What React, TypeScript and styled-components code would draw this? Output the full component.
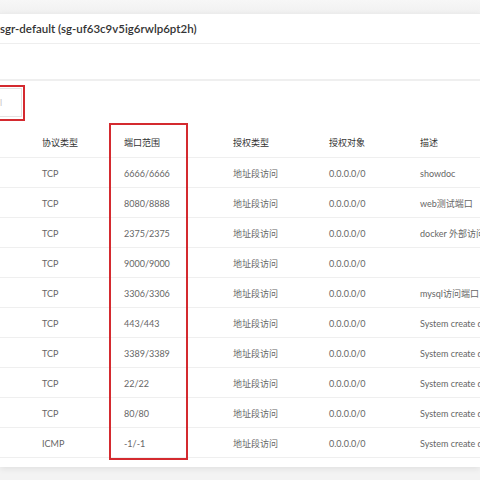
import React from "react";
import styled, { createGlobalStyle } from "styled-components";

const Global = createGlobalStyle`
  html, body { margin: 0; padding: 0; background: #f3f3f3; }
  body { font-family: Lato, "Noto Sans CJK SC", sans-serif; }
`;

const Page = styled.div`
  width: 480px;
  height: 480px;
  overflow: hidden;
  background: #f3f3f3;
  display: flex;
  flex-direction: column;
`;

const TopBand = styled.div`
  height: 13px;
  flex: none;
  background: linear-gradient(#f7f7f7, #f1f1f1);
`;

const Card = styled.div`
  background: #fff;
  box-shadow: 0 2px 6px rgba(0, 0, 0, 0.08);
  border-top: 1px solid #ececec;
  padding-bottom: 9px;
  display: flex;
  flex-direction: column;
`;

const TitleRow = styled.div`
  height: 29px;
  display: flex;
  align-items: center;
  border-bottom: 1px solid #eeeeee;
  font-size: 11.5px;
  font-weight: 600;
  color: #333;
  white-space: nowrap;
`;

const BlankSection = styled.div`
  height: 35px;
  border-bottom: 2px solid #efefef;
`;

const Toolbar = styled.div`
  height: 46px;
  padding-top: 7px;
  box-sizing: border-box;
`;

const InputWrap = styled.div`
  position: relative;
  width: 22px;
  height: 29px;
`;

const InputBox = styled.div`
  width: 22px;
  height: 29px;
  box-sizing: border-box;
  border: 1px solid #e3e3e3;
  border-left: none;
  display: flex;
  align-items: center;
  font-size: 9px;
  color: #c8c8c8;
  overflow: hidden;
`;

const Highlight = styled.div`
  position: absolute;
  border: 2px solid #d42a2f;
  pointer-events: none;
`;

const InputHighlight = styled(Highlight)`
  left: -10px;
  right: -3px;
  top: -3px;
  bottom: -4px;
`;

const ColumnHighlight = styled(Highlight)`
  left: 109px;
  width: 75px;
  top: -4px;
  bottom: -2px;
`;

const TableWrap = styled.div`
  position: relative;
`;

const Grid = styled.div`
  display: grid;
  grid-template-columns: 124px 109px 96px 91px 160px;
  width: 580px;
`;

const Row = styled.div<{ $head?: boolean }>`
  display: contents;
  & > div {
    height: ${(p) => (p.$head ? "31px" : "30px")};
    padding-top: 1px;
    border-bottom: 1px solid #efefef;
    color: ${(p) => (p.$head ? "#333" : "#666")};
  }
`;

const Cell = styled.div`
  box-sizing: border-box;
  display: flex;
  align-items: center;
  font-size: 9px;
  white-space: nowrap;
  &:first-child {
    padding-left: 42px;
  }
`;

const rows = [
  ["TCP", "6666/6666", "地址段访问", "0.0.0.0/0", "showdoc"],
  ["TCP", "8080/8888", "地址段访问", "0.0.0.0/0", "web测试端口"],
  ["TCP", "2375/2375", "地址段访问", "0.0.0.0/0", "docker 外部访问"],
  ["TCP", "9000/9000", "地址段访问", "0.0.0.0/0", ""],
  ["TCP", "3306/3306", "地址段访问", "0.0.0.0/0", "mysql访问端口"],
  ["TCP", "443/443", "地址段访问", "0.0.0.0/0", "System create default"],
  ["TCP", "3389/3389", "地址段访问", "0.0.0.0/0", "System create default"],
  ["TCP", "22/22", "地址段访问", "0.0.0.0/0", "System create default"],
  ["TCP", "80/80", "地址段访问", "0.0.0.0/0", "System create default"],
  ["ICMP", "-1/-1", "地址段访问", "0.0.0.0/0", "System create default"],
];

const headers = ["协议类型", "端口范围", "授权类型", "授权对象", "描述"];

export default function App() {
  return (
    <Page>
      <Global />
      <TopBand />
      <Card>
        <TitleRow>sgr-default (sg-uf63c9v5ig6rwlp6pt2h)</TitleRow>
        <BlankSection />
        <Toolbar>
          <InputWrap>
            <InputBox>l</InputBox>
            <InputHighlight />
          </InputWrap>
        </Toolbar>
        <TableWrap>
          <Grid>
            <Row $head>
              {headers.map((h) => (
                <Cell key={h}>{h}</Cell>
              ))}
            </Row>
            {rows.map((r, i) => (
              <Row key={i}>
                {r.map((c, j) => (
                  <Cell key={j}>{c}</Cell>
                ))}
              </Row>
            ))}
          </Grid>
          <ColumnHighlight />
        </TableWrap>
      </Card>
    </Page>
  );
}
